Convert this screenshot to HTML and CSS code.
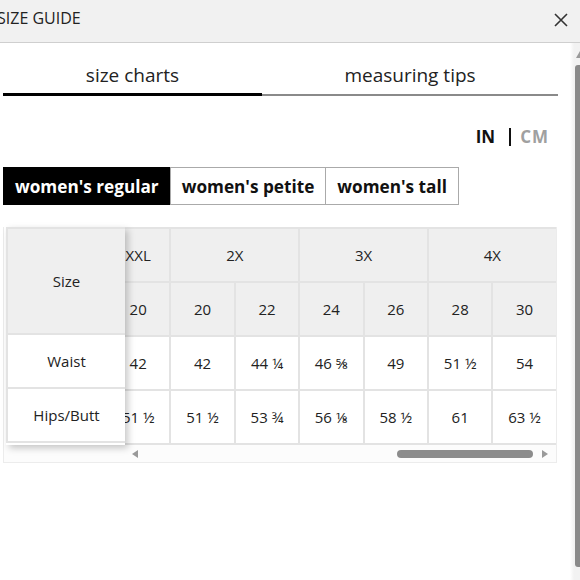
FILE: index.html
```html
<!DOCTYPE html>
<html>
<head>
<meta charset="utf-8">
<link rel="stylesheet" href="styles.css">
</head>
<body>
<header class="topbar">
  <h1 class="title">SIZE GUIDE</h1>
  <button class="close" aria-label="close">
    <svg width="14" height="14" viewBox="0 0 14 14"><path d="M1 1L13 13M13 1L1 13" stroke="#333" stroke-width="1.6" fill="none"/></svg>
  </button>
</header>
<div class="page">
  <main class="content">
    <nav class="tabs">
      <div class="tab active">size charts</div>
      <div class="tab">measuring tips</div>
    </nav>
    <div class="units">
      <span class="unit on">IN</span>
      <span class="sep"></span>
      <span class="unit off">CM</span>
    </div>
    <div class="fits">
      <button class="fit active">women's regular</button>
      <button class="fit">women's petite</button>
      <button class="fit">women's tall</button>
    </div>
    <section class="chart">
      <div class="chart-body">
        <div class="sticky">
          <div class="s-cell s-head">Size</div>
          <div class="s-cell">Waist</div>
          <div class="s-cell">Hips/Butt</div>
        </div>
        <div class="viewport">
          <table class="grid">
            <colgroup>
              <col class="c"><col class="c"><col class="c"><col class="c"><col class="c"><col class="c"><col class="c">
            </colgroup>
            <tr class="h1">
              <th>XXL</th><th colspan="2">2X</th><th colspan="2">3X</th><th colspan="2">4X</th>
            </tr>
            <tr class="h2">
              <th>20</th><th>20</th><th>22</th><th>24</th><th>26</th><th>28</th><th>30</th>
            </tr>
            <tr>
              <td>42</td><td>42</td><td>44 <span class="fr">¼</span></td><td>46 <span class="fr">⅝</span></td><td>49</td><td>51 <span class="fr">½</span></td><td>54</td>
            </tr>
            <tr>
              <td>51 <span class="fr">½</span></td><td>51 <span class="fr">½</span></td><td>53 <span class="fr">¾</span></td><td>56 <span class="fr">⅛</span></td><td>58 <span class="fr">½</span></td><td>61</td><td>63 <span class="fr">½</span></td>
            </tr>
          </table>
        </div>
      </div>
      <div class="hscroll">
        <span class="arrow left"></span>
        <div class="track"><div class="thumb"></div></div>
        <span class="arrow right"></span>
      </div>
    </section>
  </main>
  <aside class="vscroll">
    <span class="v-arrow"></span>
    <div class="v-thumb"></div>
  </aside>
</div>
</body>
</html>
```
FILE: styles.css
```css
* { box-sizing: border-box; }
html, body { margin: 0; padding: 0; }
body {
  width: 580px;
  height: 580px;
  overflow: hidden;
  background: #fff;
  font-family: "Open Sans", "Noto Sans", "DejaVu Sans", sans-serif;
  color: #222;
}
.topbar {
  height: 43px;
  background: #f1f1f1;
  border-bottom: 1px solid #cfcfcf;
  display: flex;
  align-items: center;
  justify-content: space-between;
  padding: 0 12px 6px 0;
}
.title {
  margin: 0 0 0 -3px;
  font-size: 16px;
  font-weight: 400;
  color: #222;
}
.close {
  border: 0;
  background: none;
  padding: 0;
  width: 14px;
  height: 14px;
  display: flex;
  margin-top: 4px;
}
.page {
  display: flex;
  justify-content: space-between;
  height: 537px;
}
.content {
  width: 558px;
  padding-left: 3px;
}
.tabs {
  margin-top: 20px;
  display: grid;
  grid-template-columns: 259px 296px;
  align-items: end;
}
.tab {
  text-align: center;
  font-size: 19px;
  line-height: 24px;
  color: #222;
  padding-bottom: 7px;
  border-bottom: 2px solid #8a8a8a;
}
.tab.active {
  padding-bottom: 6px;
  border-bottom: 3px solid #000;
}
.units {
  margin-top: 31px;
  display: flex;
  justify-content: flex-end;
  align-items: center;
  padding-right: 9px;
  height: 20px;
}
.unit {
  font-size: 17px;
  font-weight: 700;
  line-height: 20px;
}
.unit.on { color: #111; }
.unit.off { color: #a0a0a0; letter-spacing: 1px; }
.sep {
  width: 2px;
  height: 18px;
  background: #111;
  margin: 0 9px 0 14px;
}
.fits {
  margin-top: 20px;
  display: flex;
}
.fit {
  height: 38px;
  border: 1px solid #aaa;
  background: #fff;
  color: #111;
  font-family: inherit;
  font-size: 17.2px;
  font-weight: 700;
  padding: 0 11px;
  margin-left: -1px;
}
.fit:first-child { margin-left: 0; }
.fit.active {
  background: #000;
  color: #fff;
  border-color: #000;
}
.chart {
  margin-top: 22px;
  width: 554px;
  border: 1px solid #ececec;
  border-top: 0;
}
.chart-body {
  display: flex;
  padding-left: 2px;
}
.sticky {
  width: 119px;
  flex: none;
  position: relative;
  z-index: 2;
  box-shadow: 3px 3px 7px rgba(0, 0, 0, 0.22);
  background: #fff;
}
.s-cell {
  height: 54px;
  display: flex;
  align-items: center;
  justify-content: center;
  font-size: 15px;
  border: 2px solid #e3e3e3;
  border-top: 0;
  border-right: 0;
  background: #fff;
}
.s-cell.s-head {
  height: 108px;
  background: #efefef;
  border-top: 2px solid #e3e3e3;
}
.viewport {
  flex: 1;
  overflow: hidden;
}
.grid {
  margin-left: -20px;
  border-collapse: collapse;
  table-layout: fixed;
  width: 451px;
}
.grid .c { width: 64.4px; }
.grid th, .grid td {
  height: 54px;
  padding: 0;
  text-align: center;
  font-size: 15px;
  font-weight: 400;
  color: #222;
  border: 2px solid #e3e3e3;
  white-space: nowrap;
}
.grid th { background: #efefef; }
.grid td { background: #fff; }
.fr { font-size: 15px; }
.hscroll {
  height: 17px;
  display: flex;
  align-items: center;
  padding-left: 123px;
  padding-right: 3px;
  background: #fcfcfc;
}
.arrow {
  width: 16px;
  height: 17px;
  display: flex;
  align-items: center;
  justify-content: center;
  flex: none;
}
.arrow::before {
  content: "";
  width: 0;
  height: 0;
  border-top: 4px solid transparent;
  border-bottom: 4px solid transparent;
}
.arrow.left::before { border-right: 6px solid #9a9a9a; }
.arrow.right::before { border-left: 6px solid #9a9a9a; }
.track {
  flex: 1;
  display: flex;
  justify-content: flex-end;
}
.thumb {
  width: 136px;
  height: 8px;
  border-radius: 4px;
  background: #8c8c8c;
  margin-right: 4px;
}
.vscroll {
  width: 10px;
  background: linear-gradient(to right, #fff 0, #f2f2f2 40%, #f2f2f2 100%);
  display: flex;
  flex-direction: column;
  align-items: flex-end;
  padding-top: 8px;
}
.v-arrow {
  width: 0;
  height: 0;
  border-left: 4px solid transparent;
  border-right: 4px solid transparent;
  border-bottom: 7px solid #9a9a9a;
  margin-right: -4px;
}
.v-thumb {
  margin-top: 7px;
  width: 5px;
  height: 502px;
  background: #8a8a8a;
  border-radius: 3px 0 0 3px;
}
```
